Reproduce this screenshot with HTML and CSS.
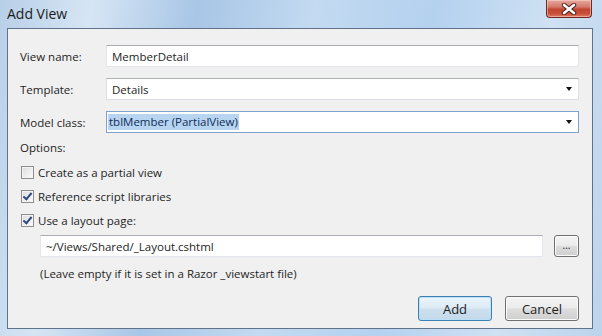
FILE: index.html
```html
<!DOCTYPE html>
<html lang="en">
  <head>
    <meta charset="UTF-8" />
    <title>Add View</title>
    <link rel="stylesheet" href="styles.css">
  </head>
  <body>
    <div class="window">
      <!-- title bar -->
      <div class="titlebar">
        <span class="title">Add View</span>
        <div class="close">
          <svg width="16" height="12" viewBox="0 0 16 12">
            <path d="M3 2 L13 10 M13 2 L3 10" stroke="#4a1b15" stroke-width="4.4" stroke-linecap="round" />
            <path d="M3 2 L13 10 M13 2 L3 10" stroke="#ffffff" stroke-width="2.6" stroke-linecap="round" />
          </svg>
        </div>
      </div>

      <!-- dialog body -->
      <div class="client">
        <div class="row">
          <label class="lbl">View name:</label>
          <div class="field">MemberDetail</div>
        </div>
        <div class="row">
          <label class="lbl">Template:</label>
          <div class="field combo">Details<span class="arrow"></span></div>
        </div>
        <div class="row">
          <label class="lbl">Model class:</label>
          <div class="field combo focus"><span class="sel">tblMember (PartialView)</span><span class="arrow"></span></div>
        </div>

        <div class="options">Options:</div>
        <div class="check"><span class="box"></span>Create as a partial view</div>
        <div class="check"><span class="box on"></span>Reference script libraries</div>
        <div class="check"><span class="box on"></span>Use a layout page:</div>

        <div class="layout-row">
          <div class="field path">~/Views/Shared/_Layout.cshtml</div>
          <div class="btn small">...</div>
        </div>
        <div class="hint">(Leave empty if it is set in a Razor _viewstart file)</div>

        <div class="buttons">
          <div class="btn def">Add</div>
          <div class="btn">Cancel</div>
        </div>
      </div>
    </div>
  </body>
</html>
```

FILE: styles.css
```css
body {
  margin: 0;
  font-family: "Open Sans", "Noto Sans", sans-serif;
  font-size: 11.5px;
  color: #1e1e1e;
}
.window {
  width: 602px;
  height: 336px;
  box-sizing: border-box;
  display: flex;
  flex-direction: column;
  background: linear-gradient(100deg, #b7cfe8 0%, #d6e5f4 14%, #a8c6e6 30%, #c3daf1 48%, #b4d1ef 66%, #cfe1f3 84%, #bcd4ec 100%);
}
.titlebar {
  height: 28px;
  display: flex;
  align-items: center;
  justify-content: space-between;
  padding-left: 7px;
  position: relative;
}
.title {
  font-size: 14px;
  color: #1a1a1a;
  margin-top: -1px;
}
.close {
  width: 46px;
  height: 18px;
  margin-right: 10px;
  align-self: flex-start;
  box-sizing: border-box;
  border: 1px solid #6e2a22;
  border-top: none;
  border-radius: 0 0 4px 4px;
  background: linear-gradient(#e6a99e 0%, #d47a6c 40%, #c14530 55%, #c8503b 80%, #e07a5e 100%);
  box-shadow: inset 0 0 0 1px rgba(255, 220, 210, 0.5);
  display: flex;
  align-items: center;
  justify-content: center;
}
.client {
  flex: 1;
  margin: 0 9px 7px 7px;
  background: #f0f0f0;
  border: 1px solid #5f738b;
  padding: 16px 13px 0 12px;
  display: flex;
  flex-direction: column;
}
.row {
  display: flex;
  align-items: center;
  height: 22px;
  margin-bottom: 11px;
}
.lbl {
  width: 86px;
}
.field {
  flex: 1;
  height: 22px;
  box-sizing: border-box;
  background: #fff;
  border: 1px solid #e2e6ea;
  border-top-color: #abadb3;
  padding-left: 5px;
  display: flex;
  align-items: center;
  position: relative;
}
.combo {
  border-color: #dcdfe3;
  border-top-color: #adb2b9;
}
.focus {
  border-color: #7da2ce;
  padding-left: 1px;
}
.sel {
  background: #b7d4f1;
  color: #0f2e57;
  padding: 0 1px;
  line-height: 16px;
}
.arrow {
  position: absolute;
  right: 6px;
  top: 8px;
  border-left: 3.5px solid transparent;
  border-right: 3.5px solid transparent;
  border-top: 4px solid #111;
}
.options {
  margin-top: -5px;
  height: 18px;
  line-height: 18px;
}
.check {
  display: flex;
  align-items: center;
  height: 18px;
  margin-top: 6px;
  margin-left: 1px;
}
.check .box {
  width: 13px;
  height: 13px;
  box-sizing: border-box;
  border: 1px solid #8f8f8f;
  background: linear-gradient(135deg, #dcdcdc, #fbfbfb);
  box-shadow: inset 0 0 0 1px #f4f4f4;
  margin-right: 4px;
  position: relative;
}
.check .box.on::after {
  content: "";
  position: absolute;
  left: 3px;
  top: 0px;
  width: 3px;
  height: 7px;
  border: solid #34497f;
  border-width: 0 2px 2px 0;
  transform: rotate(40deg);
}
.layout-row {
  display: flex;
  margin-top: 6px;
  margin-left: 20px;
  gap: 11px;
}
.path {
  flex: none;
  width: 503px;
}
.hint {
  margin-left: 20px;
  margin-top: 8px;
  height: 18px;
  line-height: 18px;
}
.btn {
  box-sizing: border-box;
  border: 1px solid #707070;
  border-radius: 3px;
  background: linear-gradient(#f4f4f4 0%, #ebebeb 48%, #dddddd 52%, #cfcfcf 100%);
  box-shadow: inset 0 0 0 1px #fbfbfb;
  display: flex;
  align-items: center;
  justify-content: center;
}
.btn.small {
  width: 25px;
  height: 22px;
  font-size: 10px;
  line-height: 10px;
  padding-bottom: 2px;
}
.buttons {
  display: flex;
  justify-content: flex-end;
  gap: 13px;
  margin-top: auto;
  margin-bottom: 7px;
}
.buttons .btn {
  width: 74px;
  height: 25px;
  font-size: 13px;
}
.btn.def {
  border-color: #3c7fb1;
  background: linear-gradient(#ecf5fb 0%, #dceaf5 48%, #cde0ee 52%, #c3d9ea 100%);
  box-shadow: inset 0 0 0 1px #b9e0f6;
}
```
